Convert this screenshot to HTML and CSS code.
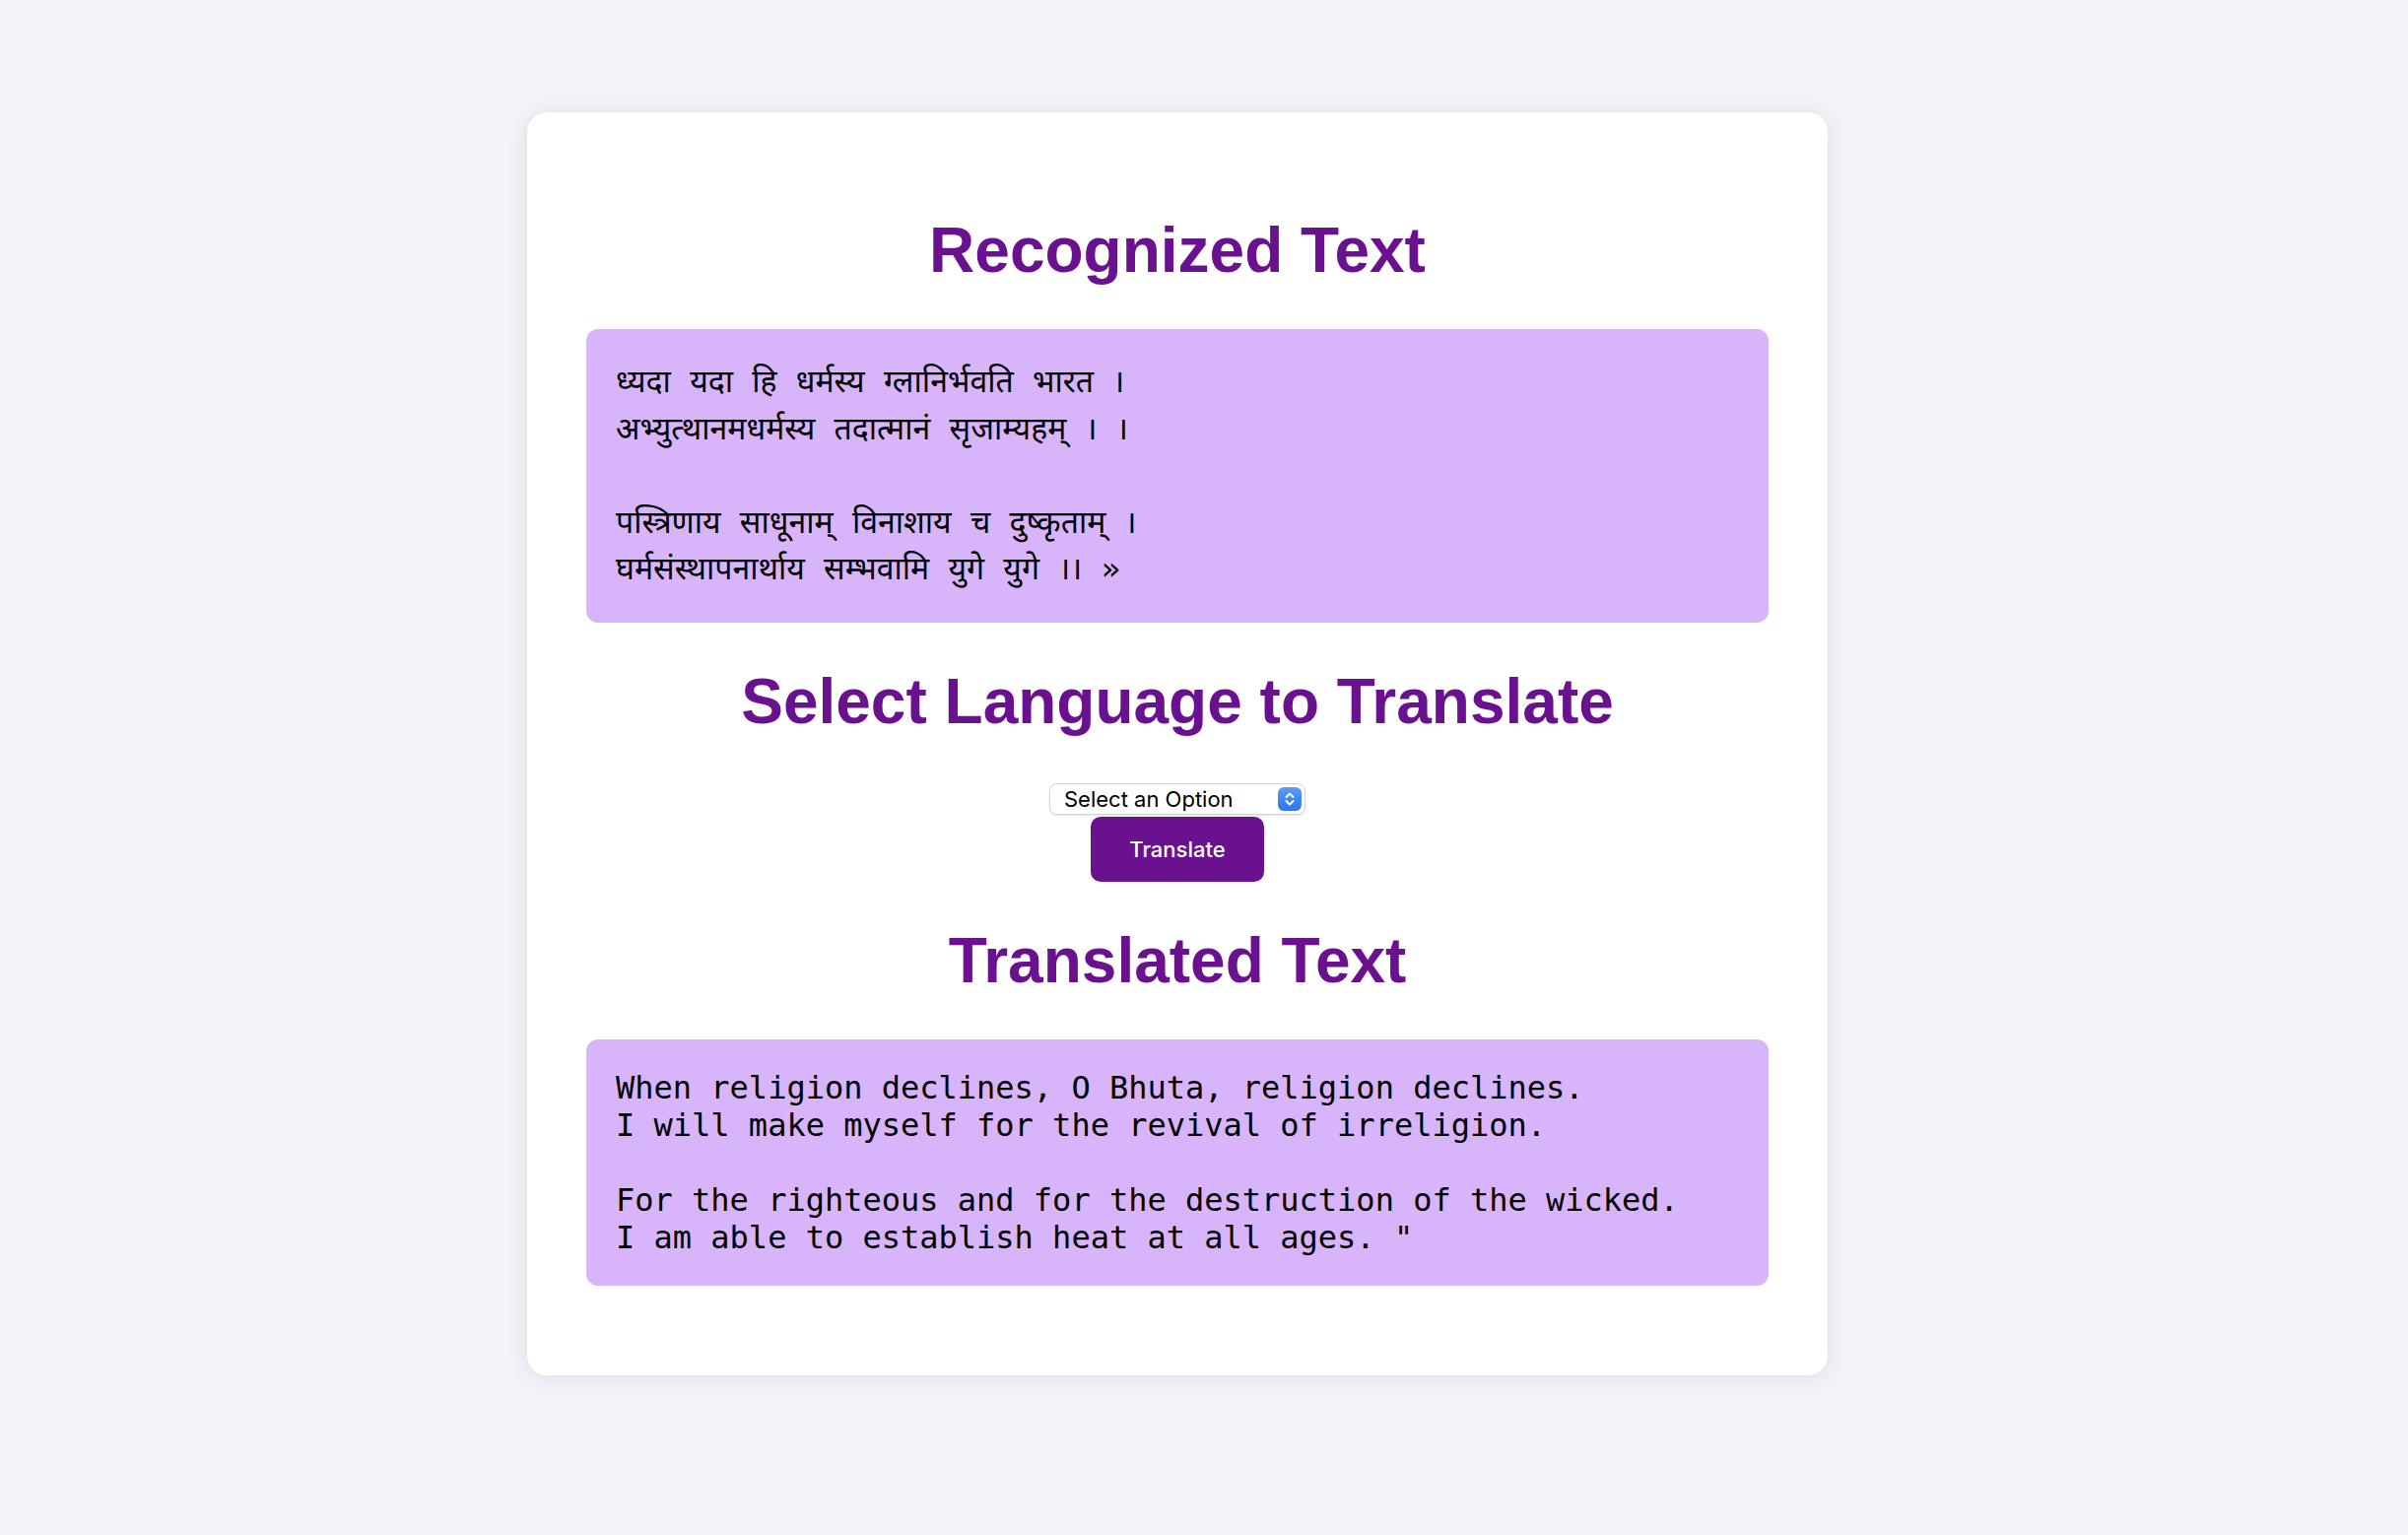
FILE: index.html
```html
<!DOCTYPE html>
<html lang="en">
<head>
<meta charset="utf-8">
<title>Translate</title>
<link rel="stylesheet" href="styles.css">
</head>
<body>
  <main class="card">
    <h1 class="title">Recognized Text</h1>
    <pre class="text-box sanskrit">ध्यदा यदा हि धर्मस्य ग्लानिर्भवति भारत ।
अभ्युत्थानमधर्मस्य तदात्मानं सृजाम्यहम् । ।

पस्त्रिणाय साधूनाम् विनाशाय च दुष्कृताम् ।
घर्मसंस्थापनार्थाय सम्भवामि युगे युगे ।। »</pre>

    <h1 class="title">Select Language to Translate</h1>
    <div class="controls">
      <div class="select-wrap">
        <select class="lang-select">
          <option>Select an Option</option>
          <option>English</option>
          <option>Hindi</option>
        </select>
        <svg class="select-icon" width="24" height="24" viewBox="0 0 24 24" aria-hidden="true">
          <defs>
            <linearGradient id="blueGrad" x1="0" y1="0" x2="0" y2="1">
              <stop offset="0" stop-color="#5a9bf9"/>
              <stop offset="1" stop-color="#2f75ef"/>
            </linearGradient>
          </defs>
          <rect x="0" y="0" width="24" height="24" rx="6" fill="url(#blueGrad)"/>
          <path d="M8.5 10 L12 6.5 L15.5 10" fill="none" stroke="#fff" stroke-width="2" stroke-linecap="round" stroke-linejoin="round"/>
          <path d="M8.5 14 L12 17.5 L15.5 14" fill="none" stroke="#fff" stroke-width="2" stroke-linecap="round" stroke-linejoin="round"/>
        </svg>
      </div>
      <button class="translate-btn" type="button">Translate</button>
    </div>

    <h1 class="title">Translated Text</h1>
    <pre class="text-box english">When religion declines, O Bhuta, religion declines.
I will make myself for the revival of irreligion.

For the righteous and for the destruction of the wicked.
I am able to establish heat at all ages. "</pre>
  </main>
</body>
</html>
```

FILE: styles.css
```css
html, body {
  margin: 0;
  padding: 0;
}

body {
  background: #f3f2f7;
  font-family: "Liberation Sans", Arial, sans-serif;
  display: flex;
  justify-content: center;
  align-items: flex-start;
  padding: 114px 54px 0 0;
  min-height: 1558px;
  box-sizing: border-box;
}

.card {
  width: 1320px;
  box-sizing: border-box;
  background: #ffffff;
  border-radius: 20px;
  padding: 60px;
  box-shadow: 0 2px 22px rgba(40, 30, 80, 0.08), 0 0 4px rgba(40, 30, 80, 0.04);
}

.title {
  margin: 43px 0;
  font-family: "Liberation Sans", Arial, sans-serif;
  font-weight: 700;
  font-size: 64px;
  line-height: 74px;
  text-align: center;
  color: #6a1190;
}

.text-box {
  margin: 0 0 31px;
  background: #d8b4fa;
  border-radius: 12px;
  padding: 30px;
  color: #000;
  white-space: pre-wrap;
  font-size: 32px;
  font-family: "DejaVu Sans Mono", "Noto Sans Devanagari", "Lohit Devanagari", "FreeSans", monospace;
}

.sanskrit {
  margin-bottom: 0;
  line-height: 47.5px;
}

.english {
  line-height: 38px;
}

.controls {
  display: flex;
  flex-direction: column;
  align-items: center;
  gap: 2px;
  padding-top: 3px;
}

.select-wrap {
  position: relative;
  width: 260px;
  height: 32px;
}

.lang-select {
  appearance: none;
  -webkit-appearance: none;
  width: 260px;
  height: 32px;
  box-sizing: border-box;
  margin: 0;
  padding: 0 40px 0 14px;
  background: #ffffff;
  border: 1px solid #d6d6da;
  border-radius: 8px;
  box-shadow: 0 1px 2px rgba(0, 0, 0, 0.12);
  font-family: Inter, "Liberation Sans", sans-serif;
  font-size: 22px;
  color: #000;
}

.select-icon {
  position: absolute;
  right: 4px;
  top: 4px;
  pointer-events: none;
}

.translate-btn {
  width: 176px;
  height: 66px;
  margin: 0;
  border: none;
  border-radius: 10px;
  background: #6a1190;
  color: #ffffff;
  font-family: Inter, "Liberation Sans", sans-serif;
  font-weight: 500;
  font-size: 22px;
  cursor: pointer;
}
```
